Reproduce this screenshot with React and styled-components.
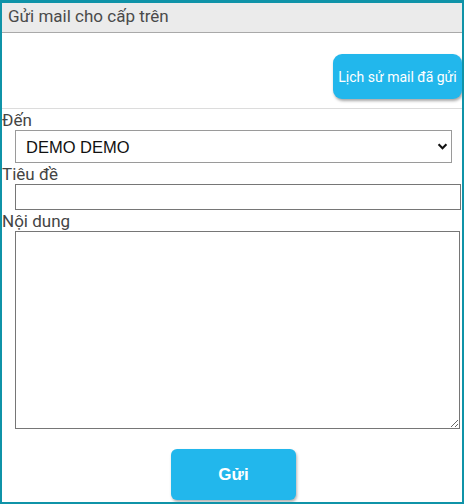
import React, { useState } from 'react';
import styled, { createGlobalStyle } from 'styled-components';

const GlobalStyle = createGlobalStyle`
	html, body {
		margin: 0;
		padding: 0;
		background: #ffffff;
	}
	* {
		box-sizing: border-box;
	}
`;

function App() {
	const [to, setTo] = useState('demo');
	const [subject, setSubject] = useState('');
	const [body, setBody] = useState('');

	return (
		<>
			<GlobalStyle />
			<Frame>
				<Header>Gửi mail cho cấp trên</Header>
				<Toolbar>
					<HistoryButton type="button">Lịch sử mail đã gửi</HistoryButton>
				</Toolbar>
				<Form onSubmit={e => e.preventDefault()}>
					<Label>Đến</Label>
					<SelectWrap>
						<Select value={to} onChange={e => setTo(e.target.value)}>
							<option value="demo">DEMO DEMO</option>
						</Select>
						<Chevron viewBox="0 0 12 8">
							<path d="M1.5 1.5 L6 6 L10.5 1.5" fill="none" stroke="#111" strokeWidth="2.4" />
						</Chevron>
					</SelectWrap>
					<Label>Tiêu đề</Label>
					<Input value={subject} onChange={e => setSubject(e.target.value)} />
					<Label>Nội dung</Label>
					<TextArea value={body} onChange={e => setBody(e.target.value)} />
					<Actions>
						<SendButton type="submit">Gửi</SendButton>
					</Actions>
				</Form>
			</Frame>
		</>
	);
}

export default App;

const Frame = styled.div`
	width: 464px;
	height: 504px;
	border: 2px solid #0f93a8;
	border-top-width: 3px;
	background: #ffffff;
	display: flex;
	flex-direction: column;
	overflow: hidden;
	font-family: Roboto, 'Noto Sans', sans-serif;
`;

const Header = styled.div`
	height: 30px;
	padding: 3px 6px 0;
	background: #ebebeb;
	border-bottom: 1px solid #a9a9a9;
	color: #4a4a4a;
	font-size: 17px;
	line-height: 20px;
`;

const Toolbar = styled.div`
	display: flex;
	justify-content: flex-end;
	padding: 21px 0 9px;
	border-bottom: 1px solid #dcdcdc;
`;

const HistoryButton = styled.button`
	width: 129px;
	height: 45px;
	border: none;
	border-radius: 9px;
	background: #22b7ec;
	color: #ffffff;
	font-family: Roboto, 'Noto Sans', sans-serif;
	font-size: 14px;
	padding: 0;
	box-shadow: 1px 2px 3px rgba(0, 0, 0, 0.35);
	cursor: pointer;
`;

const Form = styled.form`
	display: flex;
	flex-direction: column;
`;

const Label = styled.label`
	display: block;
	color: #444444;
	font-size: 17px;
	line-height: 20px;
	height: 21px;
	padding-top: 1px;
`;

const SelectWrap = styled.div`
	position: relative;
	margin-left: 13px;
	width: 437px;
	height: 33px;
`;

const Select = styled.select`
	appearance: none;
	width: 100%;
	height: 100%;
	border: 1px solid #9a9a9a;
	border-radius: 0;
	background: #ffffff;
	padding: 0 0 0 10px;
	font-family: 'Liberation Sans', Arial, sans-serif;
	font-size: 16.5px;
	color: #111111;
	outline: none;
`;

const Chevron = styled.svg`
	position: absolute;
	right: 4px;
	top: 13px;
	width: 11px;
	height: 7px;
	pointer-events: none;
`;

const Input = styled.input`
	margin-left: 13px;
	width: 446px;
	height: 26px;
	border: 1px solid #767676;
	border-radius: 0;
	padding: 0 4px;
	font-family: 'Liberation Sans', Arial, sans-serif;
	font-size: 14px;
	outline: none;
`;

const TextArea = styled.textarea`
	margin-left: 13px;
	width: 445px;
	height: 198px;
	border: 1px solid #767676;
	border-radius: 0;
	padding: 4px;
	font-family: 'Liberation Sans', Arial, sans-serif;
	font-size: 14px;
	resize: both;
	outline: none;
`;

const Actions = styled.div`
	display: flex;
	justify-content: center;
	padding-top: 20px;
	padding-left: 3px;
`;

const SendButton = styled.button`
	width: 125px;
	height: 51px;
	border: none;
	border-radius: 6px;
	background: #22b7ec;
	color: #ffffff;
	font-family: 'Liberation Sans', Arial, sans-serif;
	font-weight: bold;
	font-size: 17px;
	box-shadow: 1px 2px 3px rgba(0, 0, 0, 0.3);
	cursor: pointer;
`;
